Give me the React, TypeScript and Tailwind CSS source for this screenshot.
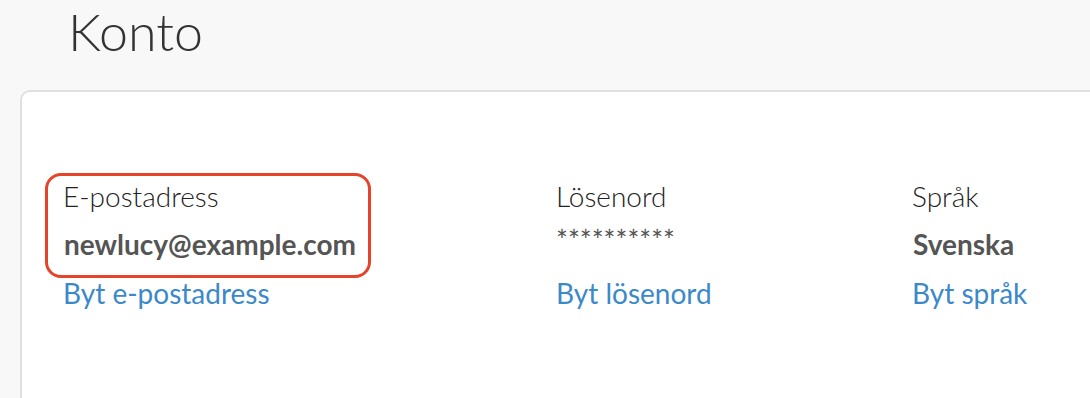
import React from "react";

export default function App() {
  return (
    <div className="w-[1090px] h-[398px] overflow-hidden bg-[#f8f8f8] font-['Lato','Liberation_Sans',sans-serif]">
      <h1 className="pl-[68px] text-[52px] leading-[62px] font-light text-[#333]">Konto</h1>
      <div className="ml-[20px] mt-[28px] w-[1100px] h-[400px] bg-white border-2 border-[#e0e0e0] rounded-tl-[10px]">
        <div className="flex pl-[41px] pt-[80px] text-[28px] leading-[48px]">
          <div className="w-[493px] flex flex-col">
            <div className="relative flex flex-col">
              <div className="absolute left-[-18px] top-[1px] w-[326px] h-[105px] border-[3.5px] border-[#e6432b] rounded-[16px]"></div>
              <span className="font-light text-[#222]">E-postadress</span>
              <span className="font-bold text-[#555] pl-px">newlucy@example.com</span>
            </div>
            <a className="text-[#3c89c9] mt-px">Byt e-postadress</a>
          </div>
          <div className="w-[356px] flex flex-col">
            <span className="font-light text-[#222]">Lösenord</span>
            <span className="text-[#555] leading-[40px] h-[48px]">**********</span>
            <a className="text-[#3c89c9] mt-px">Byt lösenord</a>
          </div>
          <div className="flex flex-col">
            <span className="font-light text-[#222]">Språk</span>
            <span className="font-bold text-[#555] pl-px">Svenska</span>
            <a className="text-[#3c89c9] mt-px">Byt språk</a>
          </div>
        </div>
      </div>
    </div>
  );
}
